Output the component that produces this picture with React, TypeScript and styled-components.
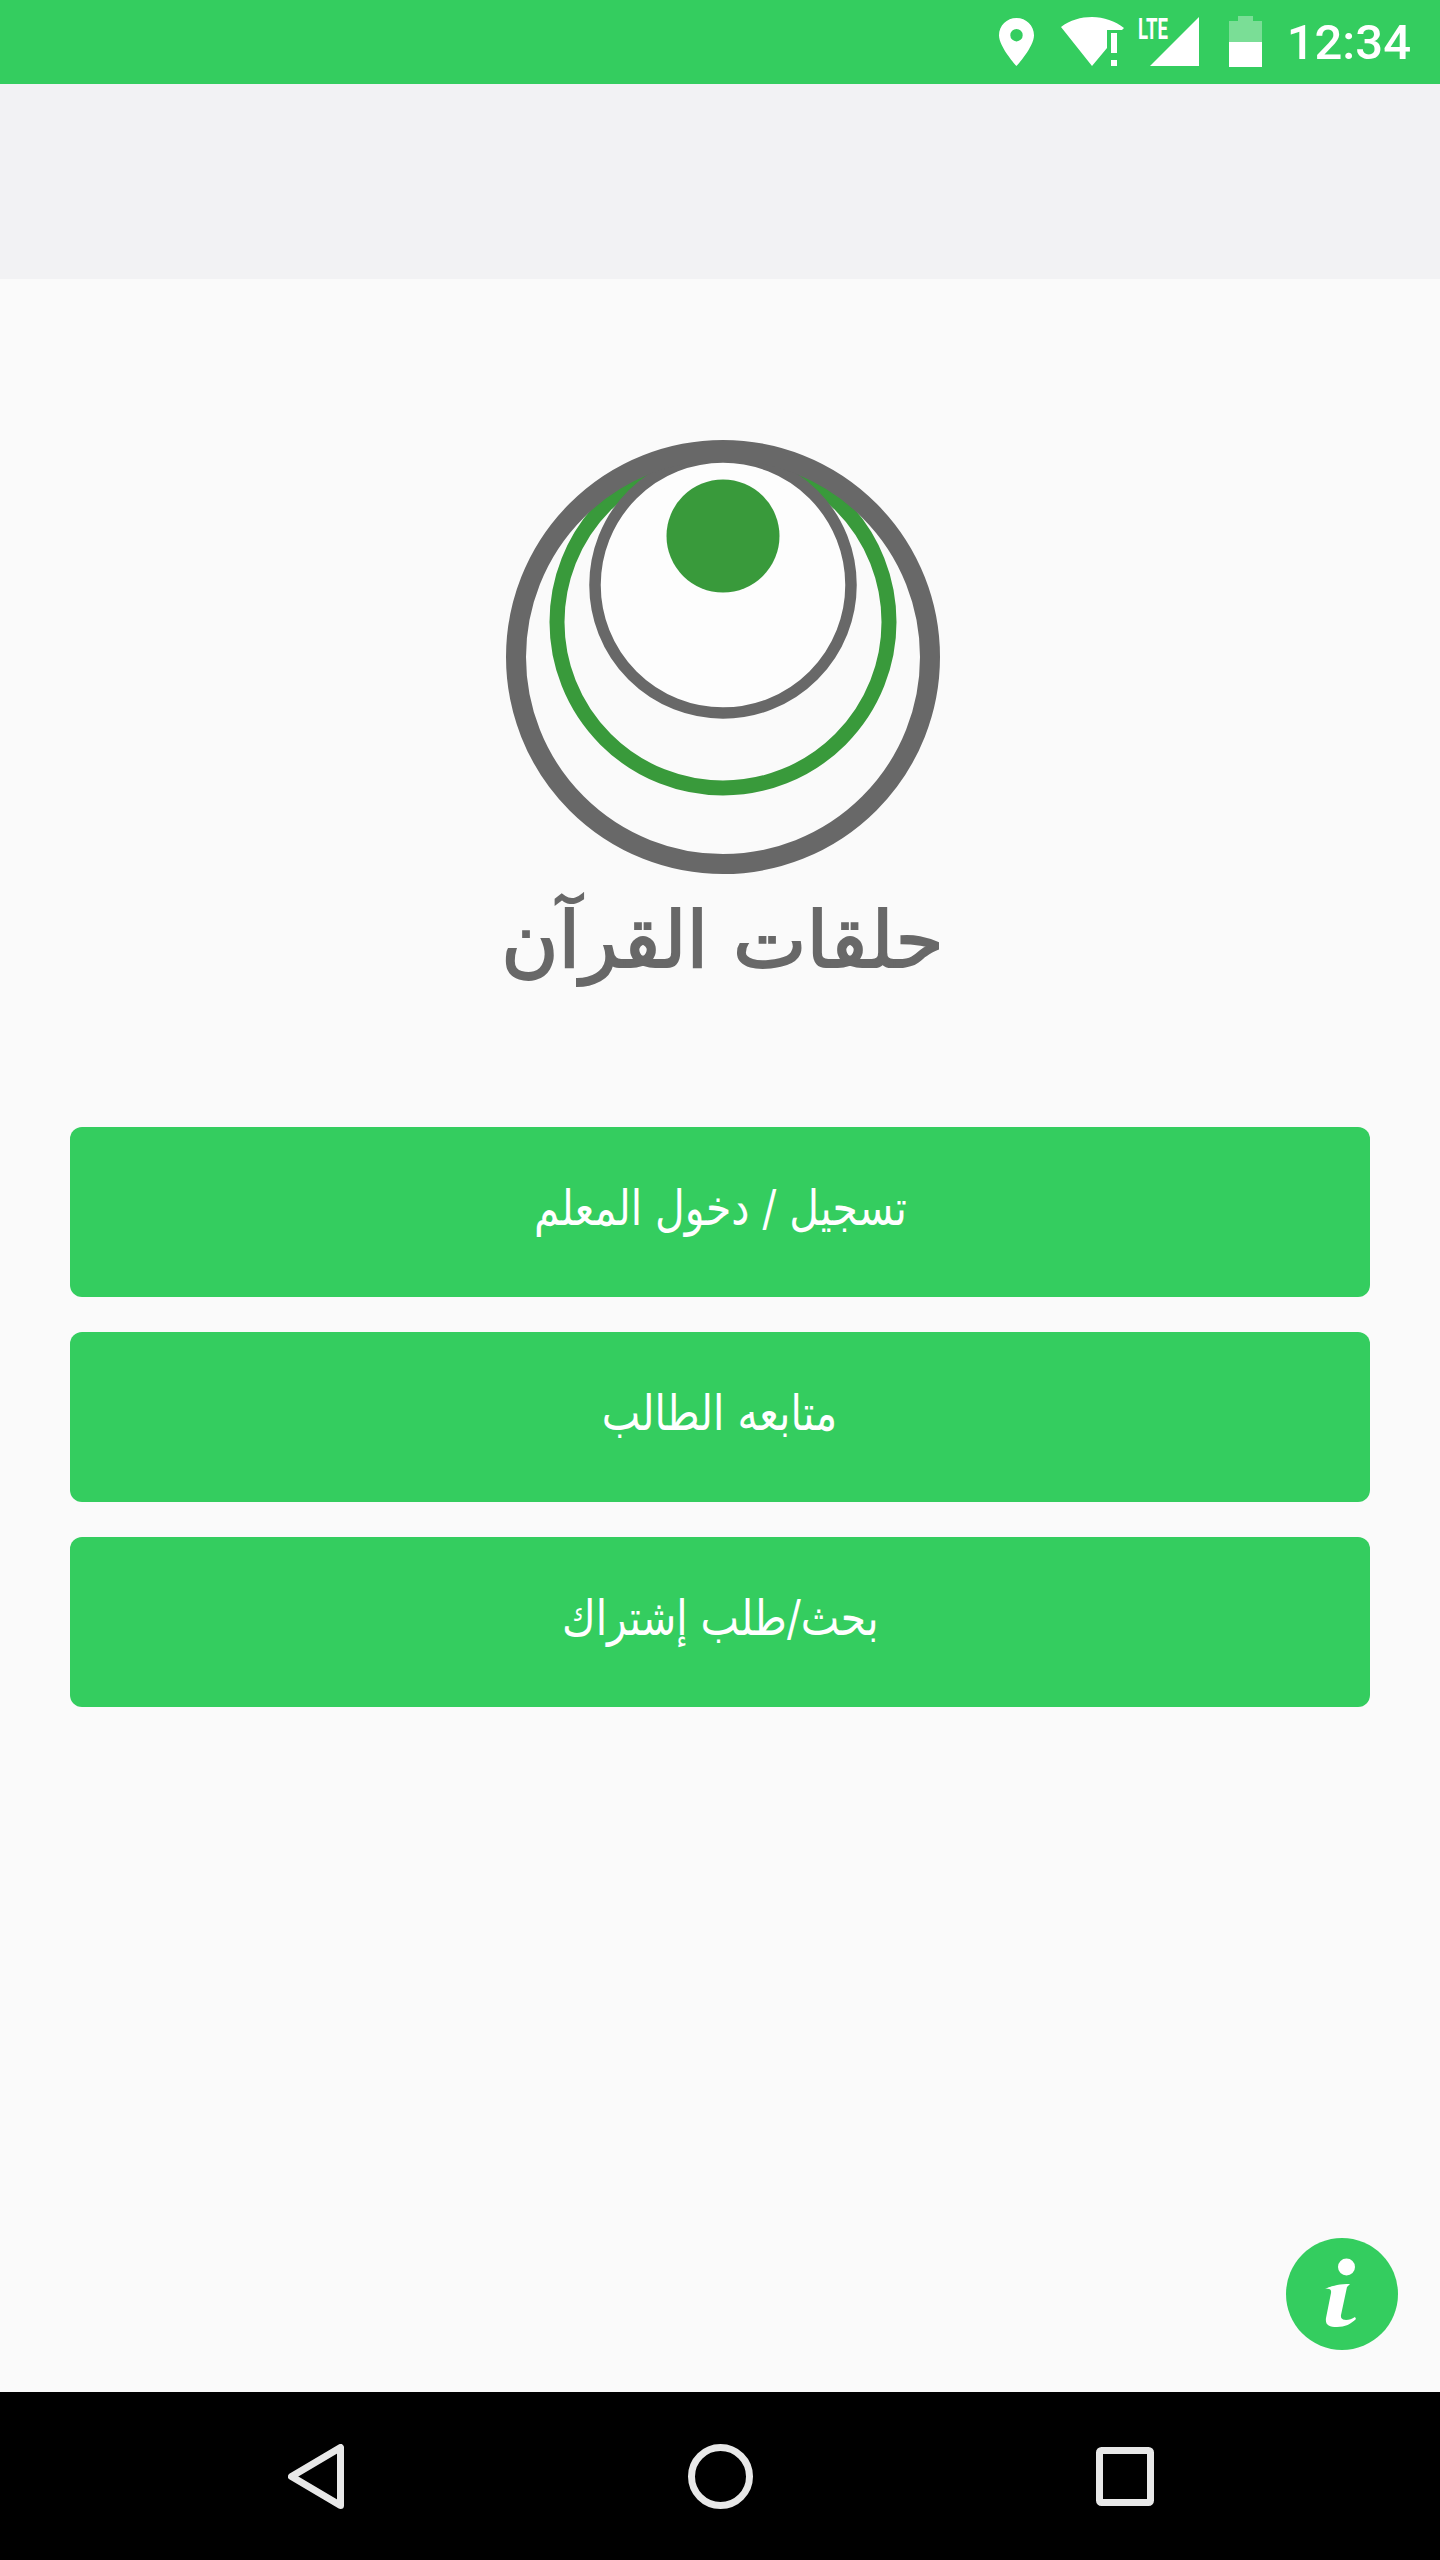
import React from "react";
import styled, { createGlobalStyle } from "styled-components";

const Global = createGlobalStyle`
  html, body { margin: 0; padding: 0; background: #fafafa; }
`;

const Screen = styled.div`
  position: relative;
  width: 1440px;
  height: 2560px;
  display: flex;
  flex-direction: column;
  background: #fafafa;
  overflow: hidden;
  font-family: "DejaVu Sans", "Noto Sans", sans-serif;
`;

const StatusBar = styled.div`
  height: 84px;
  flex: none;
  background: #34cd5f;
  display: flex;
  align-items: flex-start;
  justify-content: flex-end;
  padding-right: 29px;
  box-sizing: border-box;
`;

const StatusIcon = styled.svg<{ $left: number; $top: number }>`
  display: block;
  flex: none;
  margin-left: ${(p) => p.$left}px;
  margin-top: ${(p) => p.$top}px;
`;

const SignalGroup = styled.div`
  position: relative;
  width: 61px;
  height: 49px;
  margin-left: 14px;
  margin-top: 17px;
  flex: none;
`;

const LteLabel = styled.span`
  position: absolute;
  left: 0;
  top: -2px;
  font-family: "Roboto", sans-serif;
  font-weight: 700;
  font-size: 29px;
  line-height: 28px;
  color: #fff;
  display: inline-block;
  transform: scaleX(0.64);
  transform-origin: left top;
`;

const Clock = styled.span`
  margin-left: 25px;
  margin-top: 20px;
  font-family: "Roboto", sans-serif;
  font-weight: 500;
  font-size: 49px;
  line-height: 46px;
  color: #fff;
`;

const Toolbar = styled.div`
  height: 195px;
  flex: none;
  background: #f2f2f4;
`;

const Main = styled.main`
  flex: 1;
  display: flex;
  flex-direction: column;
  align-items: center;
  padding: 161px 70px 0;
`;

const Brand = styled.div`
  display: flex;
  flex-direction: column;
  align-items: center;
  margin-left: 5px;
`;

const Logo = styled.svg`
  display: block;
  flex: none;
`;

const Title = styled.h1`
  margin: 18px 0 0;
  font-family: "DejaVu Sans", sans-serif;
  font-weight: 400;
  font-size: 78px;
  line-height: 96px;
  color: #686868;
  -webkit-text-stroke: 2px #686868;
  white-space: nowrap;
`;

const Actions = styled.div`
  align-self: stretch;
  display: flex;
  flex-direction: column;
  gap: 35px;
  margin-top: 139px;
`;

const ActionButton = styled.button`
  height: 170px;
  border: 0;
  border-radius: 12px;
  background: #34cd5f;
  color: #fff;
  font-family: "DejaVu Sans", sans-serif;
  font-size: 44px;
  padding: 0;
`;

const ActionLabel = styled.span`
  display: inline-block;
  transform: translateY(-5px) scale(0.93, 1.12);
`;

const Fab = styled.button`
  position: absolute;
  left: 1286px;
  top: 2238px;
  width: 112px;
  height: 112px;
  padding: 0;
  border: 0;
  border-radius: 50%;
  background: #34cd5f;
  display: flex;
  align-items: center;
  justify-content: center;
`;

const NavBar = styled.nav`
  height: 168px;
  flex: none;
  background: #000;
  display: flex;
  align-items: flex-start;
  padding-left: 288px;
  box-sizing: border-box;
`;

const NavIcon = styled.svg<{ $left: number; $top: number }>`
  display: block;
  flex: none;
  margin-left: ${(p) => p.$left}px;
  margin-top: ${(p) => p.$top}px;
`;

export default function App() {
  return (
    <Screen>
      <Global />
      <StatusBar>
        <StatusIcon $left={0} $top={18} width="35" height="48" viewBox="0 0 35 48">
          <path
            fillRule="evenodd"
            fill="#fff"
            d="M17.5 0C7.8 0 0 7.6 0 17.2 0 29 17.5 48 17.5 48S35 29 35 17.2C35 7.6 27.2 0 17.5 0Zm0 11a6.2 6.2 0 1 1 0 12.4 6.2 6.2 0 0 1 0-12.4Z"
          />
        </StatusIcon>
        <StatusIcon $left={27} $top={17} width="63" height="49" viewBox="0 0 63 49">
          <path fill="#fff" d="M0 10C9 3 20 0 31 0c12 0 23 4 32 11l-2 2H46v18L31 49Z" />
          <rect fill="#fff" x="50" y="16" width="6" height="20" />
          <rect fill="#fff" x="50" y="43" width="6" height="6" />
        </StatusIcon>
        <SignalGroup>
          <LteLabel>LTE</LteLabel>
          <StatusIcon $left={0} $top={0} width="61" height="49" viewBox="0 0 61 49">
            <path fill="#fff" d="M12 49 61 0v49Z" />
          </StatusIcon>
        </SignalGroup>
        <StatusIcon $left={30} $top={16} width="33" height="51" viewBox="0 0 33 51">
          <path fill="#fff" fillOpacity="0.35" d="M9 0h15v5h9v21H0V5h9Z" />
          <rect fill="#fff" x="0" y="26" width="33" height="25" />
        </StatusIcon>
        <Clock>12:34</Clock>
      </StatusBar>
      <Toolbar />
      <Main>
        <Brand>
          <Logo width="434" height="434" viewBox="0 0 434 434">
            <circle cx="217" cy="182" r="166" fill="none" stroke="#399a3b" strokeWidth="15" />
            <circle cx="217" cy="145" r="128" fill="#fdfdfd" stroke="#686868" strokeWidth="11.500" />
            <circle cx="217" cy="217" r="207" fill="none" stroke="#686868" strokeWidth="20" />
            <circle cx="217" cy="96" r="56.500" fill="#399a3b" />
          </Logo>
          <Title dir="rtl">حلقات القرآن</Title>
        </Brand>
        <Actions>
          <ActionButton dir="rtl"><ActionLabel>تسجيل / دخول المعلم</ActionLabel></ActionButton>
          <ActionButton dir="rtl"><ActionLabel>متابعه الطالب</ActionLabel></ActionButton>
          <ActionButton dir="rtl"><ActionLabel>بحث/طلب إشتراك</ActionLabel></ActionButton>
        </Actions>
      </Main>
      <Fab aria-label="info">
        <svg width="112" height="112" viewBox="0 0 112 112">
          <circle cx="60.500" cy="29" r="8.500" fill="#fff" />
          <path
            fill="#fff"
            d="M39 51c6-3 14-5 25-5l-3 3-6 28c-.6 4 2 5 5 5 3 0 6-1 9-3l1 2c-5 5-11 8-19 8-8 0-12-2-11-9l5-25c.6-3-1-5-6-4Z"
          />
        </svg>
      </Fab>
      <NavBar>
        <NavIcon $left={0} $top={52} width="56" height="65" viewBox="0 0 56 65">
          <path fill="none" stroke="#e8e8e8" strokeWidth="7" strokeLinejoin="round" d="M52.500 3.500v58L3.500 32.500Z" />
        </NavIcon>
        <NavIcon $left={344} $top={52} width="65" height="65" viewBox="0 0 65 65">
          <circle cx="32.500" cy="32.500" r="29" fill="none" stroke="#e8e8e8" strokeWidth="7" />
        </NavIcon>
        <NavIcon $left={343} $top={55} width="58" height="59" viewBox="0 0 58 59">
          <rect x="3.500" y="3.500" width="51" height="52" rx="2" fill="none" stroke="#e8e8e8" strokeWidth="7" />
        </NavIcon>
      </NavBar>
    </Screen>
  );
}
